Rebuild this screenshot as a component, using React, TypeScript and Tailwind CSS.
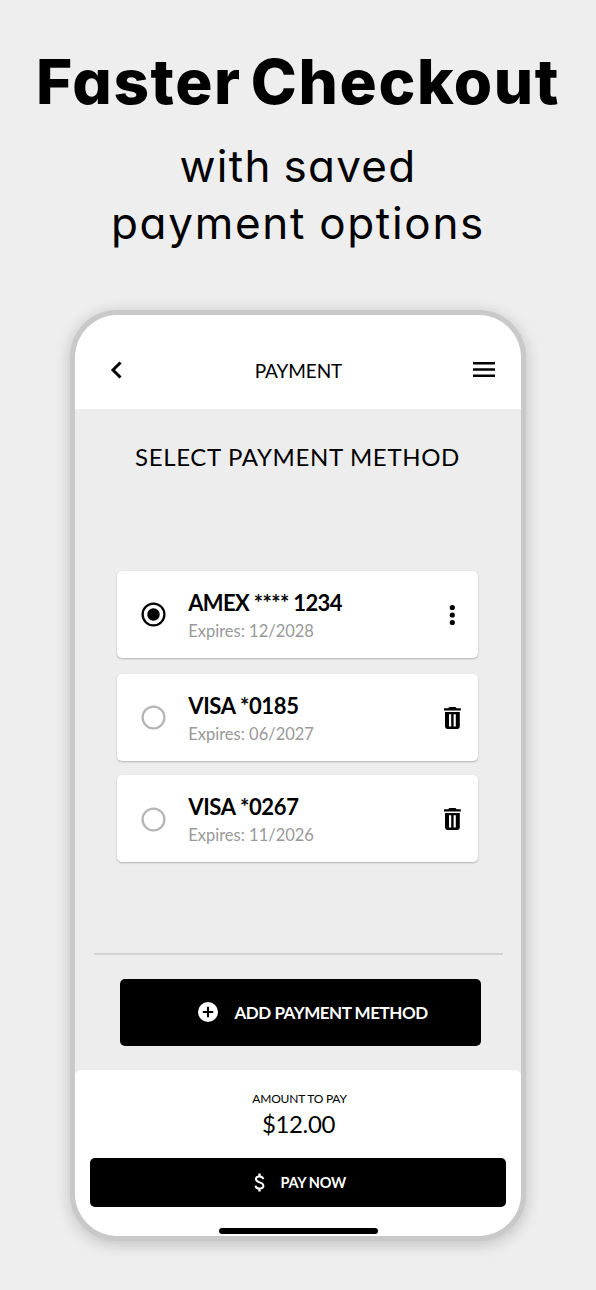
interface PaymentMethod {
  name: string;
  expires: string;
  selected?: boolean;
}

const METHODS: PaymentMethod[] = [
  { name: 'AMEX **** 1234', expires: '12/2028', selected: true },
  { name: 'VISA *0185', expires: '06/2027' },
  { name: 'VISA *0267', expires: '11/2026' },
];

function BackIcon() {
  return (
    <svg width="12" height="18" viewBox="0 0 12 18" fill="none" stroke="currentColor" strokeWidth="3">
      <path d="M10.5 1.5 3 9l7.500 7.500" />
    </svg>
  );
}

function MenuIcon() {
  return (
    <svg width="22" height="15" viewBox="0 0 22 15" fill="currentColor">
      <path d="M0 0h22v2.4H0zM0 6.3h22v2.4H0zM0 12.6h22V15H0z" />
    </svg>
  );
}

function TrashIcon() {
  return (
    <svg width="17" height="22" viewBox="0 0 17 22" fill="currentColor">
      <path d="M0 1.3h4.2L5.3 0h6.2l1.1 1.3h4.2v2.3H0z" />
      <path
        fillRule="evenodd"
        d="M1 5h14.8v14.6a2.3 2.3 0 0 1-2.3 2.3H3.3A2.3 2.3 0 0 1 1 19.6zM5 7.2v12.2h2.2V7.2zM9.6 7.2v12.2h2.2V7.2z"
      />
    </svg>
  );
}

function MoreIcon() {
  return (
    <svg width="17" height="22" viewBox="0 0 17 22" fill="currentColor">
      <circle cx="8.3" cy="3.5" r="2.6" />
      <circle cx="8.3" cy="11" r="2.6" />
      <circle cx="8.3" cy="18.5" r="2.6" />
    </svg>
  );
}

function PlusIcon() {
  return (
    <svg width="20" height="20" viewBox="0 0 20 20">
      <circle cx="10" cy="10" r="10" fill="#fff" />
      <path d="M10 4.8v10.4M4.8 10h10.4" stroke="#000" strokeWidth="2.1" />
    </svg>
  );
}

function DollarIcon() {
  return (
    <svg width="11" height="19" viewBox="0 0 11 19" fill="none" stroke="currentColor" strokeWidth="2">
      <path d="M9.3 6.2C9.1 4.500 7.700 3.400 5.500 3.400 3.300 3.400 1.900 4.500 1.900 6.100c0 4.200 7.500 2.300 7.500 6.700 0 1.700-1.500 2.800-3.900 2.800-2.300 0-3.800-1.100-4-3" />
      <path d="M5.500 0.500v3M5.500 15.500v3" strokeWidth="2.400" />
    </svg>
  );
}

function Radio({ selected }: { selected?: boolean }) {
  return (
    <svg width="25" height="25" viewBox="0 0 25 25" fill="none">
      <circle cx="12.5" cy="12.5" r="10.9" stroke={selected ? '#000' : '#b5b5b5'} strokeWidth="2.3" />
      {selected && <circle cx="12.5" cy="12.5" r="6.2" fill="#000" />}
    </svg>
  );
}

function MethodCard({ name, expires, selected }: PaymentMethod) {
  return (
    <div className="flex h-[87px] w-[361.5px] items-center rounded-[5px] bg-white pt-px pr-[17.5px] pl-[24.2px] shadow-[0_1px_2px_rgba(0,0,0,0.25)] first:mb-[1.3px] first:pt-0">
      <Radio selected={selected} />
      <div className="ml-[22.3px] flex-1 pt-1 whitespace-nowrap">
        <div className={`text-[22px] leading-7 font-bold ${selected ? 'tracking-[-0.65px]' : 'tracking-[-0.35px]'}`}>
          {name}
        </div>
        <div className="text-[16.5px] leading-7 text-[#999999]">Expires: {expires}</div>
      </div>
      {selected ? <MoreIcon /> : <TrashIcon />}
    </div>
  );
}

export default function App() {
  return (
    <div className="flex h-[1290px] w-[596px] flex-col items-center overflow-hidden bg-[#eeeeee] text-black">
      <div className="mt-[42px] text-center font-['Inter',sans-serif] whitespace-nowrap [font-feature-settings:'cv11']">
        <h1 className="text-[62px] leading-[80px] font-extrabold tracking-[1.6px] [word-spacing:-6px]">Faster Checkout</h1>
        <p className="mt-[16px] text-[44px] leading-[57px]">
          <span className="tracking-[1.3px] [word-spacing:-2px]">with saved</span>
          <br />
          <span className="tracking-[1.7px] [word-spacing:-1px]">payment options</span>
        </p>
      </div>

      <div className="mt-[58px] h-[930.5px] w-[455.5px] rounded-[47px] bg-[#c9c9c9] p-[4.5px] shadow-[0_3px_16px_rgba(0,0,0,0.2)]">
        <div className="flex h-full flex-col overflow-hidden rounded-[42.5px] bg-[#ededed] font-['Lato',sans-serif]">
          <header className="flex h-[94.5px] shrink-0 items-center justify-between bg-white pt-4 pr-[26px] pl-[35px]">
            <BackIcon />
            <span className="pt-[3px] pl-[2px] text-[19px] tracking-[-0.1px]">PAYMENT</span>
            <MenuIcon />
          </header>

          <main className="flex flex-1 flex-col items-center">
            <h2 className="mt-[32px] mr-[1px] text-[24px] leading-8 tracking-[0.65px] whitespace-nowrap">SELECT PAYMENT METHOD</h2>
            <div className="mt-[98px] mr-[1px] flex flex-col gap-[14.5px]">
              {METHODS.map((m) => (
                <MethodCard key={m.name} {...m} />
              ))}
            </div>
            <div className="mt-[91.2px] h-[1.5px] w-[409px] bg-[#d2d2d2]" />
            <button
              type="button"
              className="mt-[24px] ml-[4px] flex h-[67px] w-[361px] items-center rounded-[5px] bg-black pl-[78px] text-[17px] font-bold tracking-[-0.47px] whitespace-nowrap text-white"
            >
              <PlusIcon />
              <span className="ml-[17px]">ADD PAYMENT METHOD</span>
            </button>
          </main>

          <footer className="flex h-[166.5px] shrink-0 flex-col items-center rounded-t-[6px] bg-white">
            <div className="mt-[21px] ml-[3px] text-[12px] leading-4 tracking-[-0.2px]">AMOUNT TO PAY</div>
            <div className="mt-[2px] ml-[1px] text-[24px] leading-[30px] tracking-[-0.35px]">$12.00</div>
            <button
              type="button"
              className="mt-[19.5px] flex h-[49px] w-[416px] items-center rounded-[5px] bg-black pl-[164px] text-[14.5px] font-bold tracking-[-0.3px] text-white"
            >
              <DollarIcon />
              <span className="ml-[15.5px] pt-px">PAY NOW</span>
            </button>
            <div className="mt-[20.5px] h-[6px] w-[159px] rounded-full bg-black" />
          </footer>
        </div>
      </div>
    </div>
  );
}
